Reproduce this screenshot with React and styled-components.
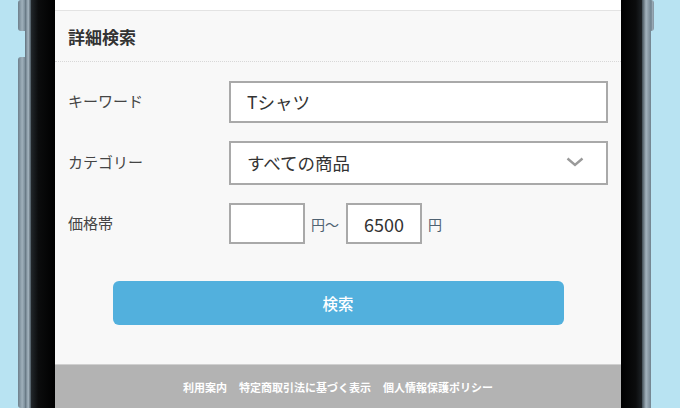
import React from 'react';
import styled, { createGlobalStyle } from 'styled-components';

const GlobalStyle = createGlobalStyle`
  html, body {
    margin: 0;
    padding: 0;
    overflow: hidden;
    background: #b8e3f2;
  }
  * { box-sizing: border-box; }
`;

const font = `"Noto Sans CJK JP", "Noto Sans", sans-serif`;

const Stage = styled.div`
  display: flex;
  height: 408px;
  padding-left: 18px;
`;

const Rail = styled.div`
  display: flex;
  flex-direction: column;
  width: ${({ $width }) => $width}px;
`;

const SideButton = styled.div`
  height: ${({ $height }) => ($height ? `${$height}px` : 'auto')};
  flex: ${({ $height }) => ($height ? 'none' : '1')};
  background: linear-gradient(to right, #6d7f8b, #9fb0bb 60%, #7b8d99);
  border-radius: ${({ $side }) => ($side === 'left' ? '3px 0 0 3px' : '0 3px 3px 0')};
`;

const RailGap = styled.div`
  height: ${({ $height }) => $height}px;
`;

const Edge = styled.div`
  width: ${({ $width }) => $width}px;
  background: ${({ $side }) =>
    $side === 'left'
      ? 'linear-gradient(to right, #5f707c, #a7b7c2 55%, #44515a)'
      : 'linear-gradient(to right, #3f4b53, #a3b3be 45%, #71838f)'};
`;

const Bezel = styled.div`
  width: ${({ $width }) => $width}px;
  background: ${({ $side }) =>
    $side === 'left'
      ? 'linear-gradient(to right, #22272b, #0b0c0d 30%, #000)'
      : 'linear-gradient(to right, #000, #0b0c0d 70%, #1d2226)'};
`;

const Screen = styled.div`
  width: 566px;
  display: flex;
  flex-direction: column;
  background: #f8f8f8;
  font-family: ${font};
  color: #333;
`;

const TopStrip = styled.div`
  height: 11px;
  background: #fff;
  border-bottom: 1px solid #e3e3e3;
`;

const Header = styled.h1`
  margin: 0;
  height: 51px;
  display: flex;
  align-items: center;
  padding-left: 13px;
  font-size: 17px;
  font-weight: 700;
  color: #333;
  border-bottom: 1px dotted #d8d8d8;
`;

const Form = styled.form`
  display: flex;
  flex-direction: column;
  gap: 18px;
  padding: 19px 13px 0;
`;

const Row = styled.div`
  display: grid;
  grid-template-columns: 161px 1fr;
  align-items: center;
`;

const Label = styled.label`
  font-size: 15px;
  color: #444;
  margin-top: -3px;
`;

const Field = styled.div`
  display: flex;
  align-items: center;
  justify-content: space-between;
  height: ${({ $height }) => $height}px;
  padding: 0 22px 2px 16px;
  background: #fff;
  border: 2px solid #a9a9a9;
  font-size: 17.5px;
  color: #333;
`;

const PriceGroup = styled.div`
  display: flex;
  align-items: center;
`;

const PriceBox = styled.div`
  width: 76px;
  height: 41px;
  display: flex;
  align-items: center;
  justify-content: center;
  background: #fff;
  border: 2px solid #a9a9a9;
  font-size: 18px;
  color: #333;
`;

const Unit = styled.span`
  font-size: 14px;
  color: #4f6272;
  margin: 0 7px 0 6px;
`;

const SubmitRow = styled.div`
  display: flex;
  justify-content: center;
  padding: 37px 0 39px;
`;

const SubmitButton = styled.button`
  width: 451px;
  height: 44px;
  border: none;
  border-radius: 6px;
  background: #52b0dd;
  color: #fff;
  font-family: ${font};
  font-size: 15.5px;
  font-weight: 500;
`;

const Footer = styled.footer`
  flex: 1;
  display: flex;
  align-items: center;
  justify-content: center;
  gap: 12px;
  background: #b3b3b3;
  border-top: 1px solid #d0d0d0;
`;

const FooterLink = styled.span`
  font-size: 11px;
  font-weight: 700;
  color: #fff;
`;

const Chevron = () => (
  <svg width="18" height="10" viewBox="0 0 18 10">
    <path d="M1.5 1.5 L9 8 L16.5 1.5" fill="none" stroke="#9a9a9a" strokeWidth="2.4" />
  </svg>
);

export default function App() {
  return (
    <>
      <GlobalStyle />
      <Stage>
        <Rail $width={7}>
          <SideButton $height={31} $side="left" />
          <RailGap $height={26} />
          <SideButton $side="left" />
        </Rail>
        <Edge $width={6} $side="left" />
        <Bezel $width={24} $side="left" />
        <Screen>
          <TopStrip />
          <Header>詳細検索</Header>
          <Form>
            <Row>
              <Label>キーワード</Label>
              <Field $height={42}>Tシャツ</Field>
            </Row>
            <Row>
              <Label>カテゴリー</Label>
              <Field $height={44}>
                すべての商品
                <Chevron />
              </Field>
            </Row>
            <Row>
              <Label>価格帯</Label>
              <PriceGroup>
                <PriceBox />
                <Unit>円〜</Unit>
                <PriceBox>6500</PriceBox>
                <Unit>円</Unit>
              </PriceGroup>
            </Row>
          </Form>
          <SubmitRow>
            <SubmitButton type="button">検索</SubmitButton>
          </SubmitRow>
          <Footer>
            <FooterLink>利用案内</FooterLink>
            <FooterLink>特定商取引法に基づく表示</FooterLink>
            <FooterLink>個人情報保護ポリシー</FooterLink>
          </Footer>
        </Screen>
        <Bezel $width={21} $side="right" />
        <Edge $width={9} $side="right" />
        <Rail $width={3}>
          <SideButton $height={31} $side="right" />
        </Rail>
      </Stage>
    </>
  );
}
